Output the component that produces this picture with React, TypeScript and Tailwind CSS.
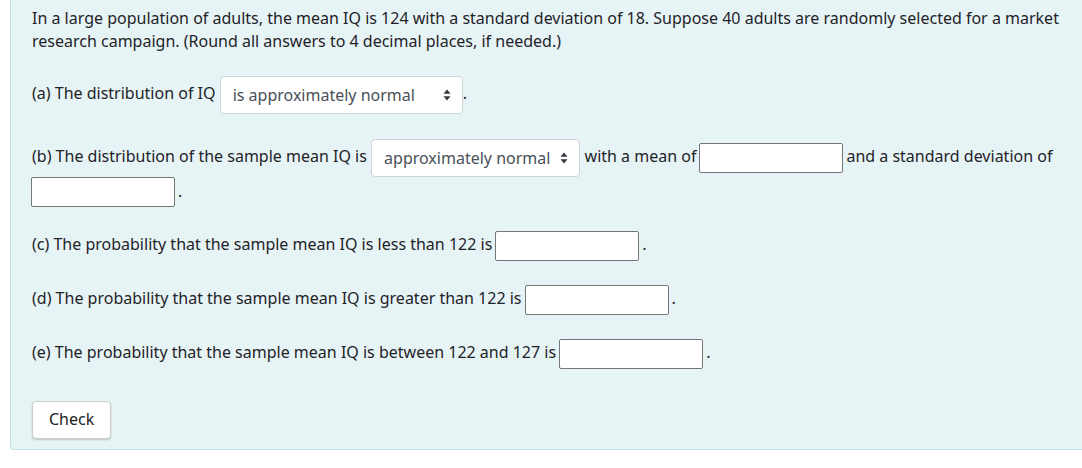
const font = { fontFamily: '"Noto Sans", "Liberation Sans", sans-serif' };

function Arrows() {
  return (
    <svg width="8" height="12" viewBox="0 0 8 12" className="shrink-0">
      <path d="M4 0.5 L7.5 4.8 L0.5 4.8 Z" fill="#343a40" />
      <path d="M4 11.5 L7.5 7.2 L0.5 7.2 Z" fill="#343a40" />
    </svg>
  );
}

function FakeSelect({ label, wide }: { label: string; wide?: boolean }) {
  return (
    <span
      className={`inline-flex items-center align-middle h-[38px] bg-white border border-[#ced4da] rounded-[4px] pl-[12px] pr-[11px] text-[#495057] ${
        wide ? "w-[243px] justify-between" : "gap-[10px]"
      }`}
    >
      <span>{label}</span>
      <Arrows />
    </span>
  );
}

function Blank({ lineStart }: { lineStart?: boolean }) {
  return (
    <span
      className={`inline-block align-middle w-[144px] h-[30px] bg-white border border-[#767676] rounded-[2px] mr-[3px] ${
        lineStart ? "-ml-[1px]" : "ml-[3px]"
      }`}
    />
  );
}

export default function App() {
  return (
    <div className="min-h-screen bg-white pl-[10px]" style={font}>
      <div className="bg-[#e7f4f6] border-l border-b border-[#c2e2e7] rounded-bl-[4px] pl-[21px] pr-[10px] pt-[7px] pb-[10px] text-[16px] text-[#1f2328] leading-[23px]">
        <p>
          In a large population of adults, the mean IQ is 124 with a standard deviation of 18. Suppose 40 adults are
          randomly selected for a market research campaign. (Round all answers to 4 decimal places, if needed.)
        </p>

        <p className="mt-[21px] leading-[38px]">
          (a) The distribution of IQ <FakeSelect label="is approximately normal" wide />.
        </p>

        <p className="mt-[25px] leading-[28px]">
          (b) The distribution of the sample mean IQ is <FakeSelect label="approximately normal" /> with a mean of
          <Blank />
          and a standard deviation of <Blank lineStart />.
        </p>

        <p className="mt-[22px] leading-[30px]">
          (c) The probability that the sample mean IQ is less than 122 is
          <Blank />.
        </p>

        <p className="mt-[22px] leading-[30px]">
          (d) The probability that the sample mean IQ is greater than 122 is
          <Blank />.
        </p>

        <p className="mt-[22px] leading-[30px]">
          (e) The probability that the sample mean IQ is between 122 and 127 is
          <Blank />.
        </p>

        <button className="mt-[32px] h-[38px] px-[16px] bg-white border border-[#cccccc] rounded-[4px] shadow-[0_1px_2px_rgba(0,0,0,0.2)] text-[#222]">
          Check
        </button>
      </div>
    </div>
  );
}
